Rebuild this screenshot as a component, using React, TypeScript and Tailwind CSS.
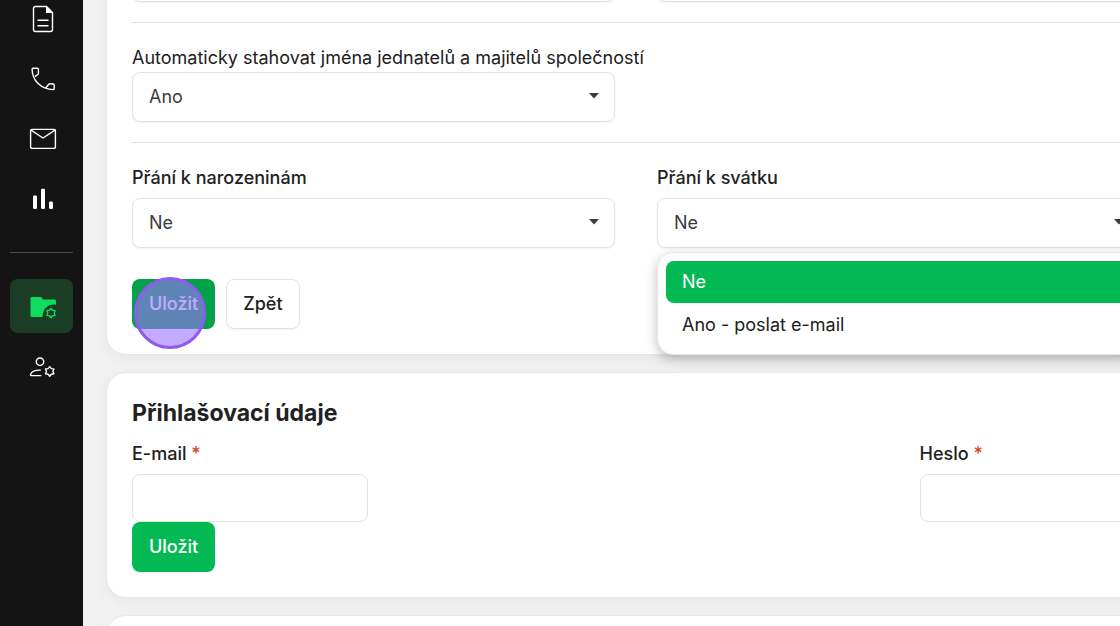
import { useState } from 'react'
import type { ReactNode } from 'react'

const gear = 'M0-4.8 1.6-2.8 4.2-2.4 3.2 0 4.2 2.4 1.6 2.8 0 4.8-1.6 2.8-4.2 2.4-3.2 0-4.2-2.4-1.6-2.8Z'

interface NavItem {
  id: string
  label: string
  icon: ReactNode
}

const mainItems: NavItem[] = [
  {
    id: 'documents',
    label: 'Dokumenty',
    icon: (
      <>
        <path d="M7.5 1.5H18.5L24.5 7.5V24.5a2 2 0 0 1-2 2H7.5a2 2 0 0 1-2-2V3.5a2 2 0 0 1 2-2Z" />
        <path d="M18 1.5V8h6.5Z" fill="currentColor" stroke="none" />
        <path d="M10 15.3h10M10 20.8h10" />
      </>
    )
  },
  {
    id: 'calls',
    label: 'Hovory',
    icon: (
      <path d="M7.3 11.4 10 9.2a1.2 1.2 0 0 0 .4-.9V4.3a1 1 0 0 0-1-1H5A.9.9 0 0 0 4.1 4.2C4.2 15.5 13 24.4 25.3 24.6a.9.9 0 0 0 .9-.9V20.2a1.2 1.2 0 0 0-1.1-1.2l-3-.3a1.600 1.600 0 0 0-1.300.5L18.300 22.300" />
    )
  },
  {
    id: 'mail',
    label: 'Pošta',
    icon: (
      <>
        <rect x="2.6" y="4.4" width="24.8" height="19" rx="1.5" />
        <path d="M3 5.2 15 13 27 5.2" />
      </>
    )
  },
  {
    id: 'stats',
    label: 'Statistiky',
    icon: (
      <g fill="currentColor" stroke="none">
        <rect x="5" y="10.5" width="4" height="13.5" rx="1.3" />
        <rect x="13" y="3.7" width="4" height="20.3" rx="1.3" />
        <rect x="21" y="16.5" width="4" height="7.5" rx="1.3" />
      </g>
    )
  }
]

const settingsItems: NavItem[] = [
  {
    id: 'settings',
    label: 'Nastavení',
    icon: (
      <>
        <path
          d="M2.5 6.4A1.4 1.4 0 0 1 3.9 5H12.5a1.5 1.5 0 0 1 1.2.6L15.2 7.5H26.5A1.5 1.5 0 0 1 28 9V12.8C20 11.5 14.5 17 14.6 25H3.9a1.4 1.4 0 0 1-1.4-1.4Z"
          fill="currentColor"
          stroke="none"
        />
        <path d={gear} transform="translate(23 21)" />
      </>
    )
  },
  {
    id: 'users',
    label: 'Uživatelé',
    icon: (
      <>
        <circle cx="12" cy="9.7" r="3.7" />
        <path d="M12.8 23.6H3.2a.7.7 0 0 1-.7-.8C3 20 7 18.1 12.4 18.1" />
        <path d={gear} transform="translate(21.7 19.4)" />
      </>
    )
  }
]

function NavLink({ item, active }: { item: NavItem; active?: boolean }) {
  return (
    <a
      href={`#${item.id}`}
      aria-label={item.label}
      className={`flex h-[54px] items-center justify-center rounded-lg ${
        active ? 'bg-[#1b3c25] text-[#0fdc5f]' : 'text-white'
      }`}
    >
      <svg
        viewBox="0 0 28 28"
        className="size-7 overflow-visible"
        fill="none"
        stroke="currentColor"
        strokeWidth="1.4"
        strokeLinejoin="round"
        strokeLinecap="round"
      >
        {item.icon}
      </svg>
    </a>
  )
}

interface SelectFieldProps {
  id: string
  label: string
  options: string[]
  value: string
  onChange?: (value: string) => void
}

function SelectField({ id, label, options, value, onChange }: SelectFieldProps) {
  return (
    <div className="relative">
      <select
        id={id}
        aria-label={label}
        value={value}
        onChange={(e) => onChange?.(e.target.value)}
        className="block h-[50px] w-full appearance-none rounded-lg border border-[#e2e2e2] bg-white px-4 text-[#3c3c3c] shadow-xs outline-none"
      >
        {options.map((option) => (
          <option key={option}>{option}</option>
        ))}
      </select>
      <svg viewBox="0 0 10 6" className="pointer-events-none absolute top-[21px] right-4 h-1.5 w-2.5 fill-[#3c3c3c]">
        <path d="M0 0h10L5 5.5Z" />
      </svg>
    </div>
  )
}

const cardClass = 'rounded-[20px] border border-[#e8e8e8] bg-white px-[25px] py-[25px] shadow-[0_4px_16px_rgba(0,0,0,0.05)]'
const inputClass = 'block h-12 w-[236px] rounded-lg border border-[#e2e2e2] bg-white px-4 outline-none'

export default function App() {
  const [download, setDownload] = useState('Ano')
  const [birthday, setBirthday] = useState('Ne')
  const [nameday, setNameday] = useState('Ne')
  const wishes = ['Ne', 'Ano - poslat e-mail']

  return (
    <div className="flex h-screen overflow-hidden bg-[#f2f2f2] font-['Inter','Liberation_Sans',sans-serif] text-lg leading-7 text-[#212121]">
      <aside className="w-[83px] shrink-0 bg-[#141414] px-2.5">
        <nav className="-mt-2 flex flex-col gap-1.5">
          {mainItems.map((item) => (
            <NavLink key={item.id} item={item} />
          ))}
          <hr className="my-5 border-[#4a4a4a]" />
          {settingsItems.map((item) => (
            <NavLink key={item.id} item={item} active={item.id === 'settings'} />
          ))}
        </nav>
      </aside>

      {/* The form area is wider than the window and runs off its right edge */}
      <main className="-mr-[594px] flex min-w-0 flex-1 flex-col gap-[17px] px-[23px]">
        <section className={`-mt-[74px] shrink-0 ${cardClass}`}>
          <div className="grid grid-cols-3 gap-x-[42px]">
            <SelectField id="sms" label="SMS" options={['Ne']} value="Ne" />
            <SelectField id="reminder" label="Připomenutí" options={['Ne']} value="Ne" />
          </div>

          <hr className="mt-5 mb-[21px] border-[#e2e2e2]" />

          <label htmlFor="download">Automaticky stahovat jména jednatelů a majitelů společností</label>
          <div className="grid grid-cols-3 gap-x-[42px]">
            <SelectField
              id="download"
              label="Automaticky stahovat jména jednatelů a majitelů společností"
              options={['Ano', 'Ne']}
              value={download}
              onChange={setDownload}
            />
          </div>

          <hr className="mt-5 mb-[21px] border-[#e2e2e2]" />

          <div className="grid grid-cols-3 gap-x-[42px]">
            <div>
              <label htmlFor="birthday" className="mb-1.5 block font-medium">Přání k narozeninám</label>
              <SelectField
                id="birthday"
                label="Přání k narozeninám"
                options={wishes}
                value={birthday}
                onChange={setBirthday}
              />
            </div>
            <div className="relative">
              <label htmlFor="nameday" className="mb-1.5 block font-medium">Přání k svátku</label>
              <SelectField
                id="nameday"
                label="Přání k svátku"
                options={wishes}
                value={nameday}
                onChange={setNameday}
              />
              <div
                role="listbox"
                aria-label="Přání k svátku"
                className="absolute inset-x-0 top-full z-10 mt-1 flex flex-col gap-px rounded-2xl border border-[#e8e8e8] bg-white p-2 shadow-[0_4px_12px_rgba(0,0,0,0.25)]"
              >
                {wishes.map((wish) => (
                  <button
                    key={wish}
                    type="button"
                    role="option"
                    aria-selected={wish === nameday}
                    onClick={() => setNameday(wish)}
                    className={`h-[42px] rounded-lg px-4 text-left ${wish === nameday ? 'bg-[#03b954] text-white' : ''}`}
                  >
                    {wish}
                  </button>
                ))}
              </div>
            </div>
          </div>

          <div className="mt-[31px] flex gap-[11px]">
            <div className="relative">
              <button type="submit" className="h-[50px] rounded-lg bg-[#02a14a] px-[17px] font-medium text-white">
                Uložit
              </button>
              {/* Click marker */}
              <span className="pointer-events-none absolute -top-0.5 left-0.5 size-[72px] rounded-full border-3 border-[#8f5bee] bg-[#9e73ff]/60" />
            </div>
            <button type="button" className="h-[50px] rounded-lg border border-[#e2e2e2] px-4 font-medium shadow-xs">
              Zpět
            </button>
          </div>
        </section>

        <section className={`shrink-0 ${cardClass}`}>
          <h2 className="mb-3 text-[23px] leading-[30px] font-bold">Přihlašovací údaje</h2>
          <div className="grid grid-cols-2 gap-x-[42px]">
            <div>
              <label htmlFor="email" className="mb-1.5 block font-medium">
                E-mail <span className="text-[#d1481f]">*</span>
              </label>
              <input id="email" type="email" className={inputClass} />
            </div>
            <div>
              <label htmlFor="password" className="mb-1.5 block font-medium">
                Heslo <span className="text-[#d1481f]">*</span>
              </label>
              <input id="password" type="password" className={inputClass} />
            </div>
          </div>
          <button type="submit" className="block h-[50px] rounded-lg bg-[#03b954] px-[17px] font-medium text-white">
            Uložit
          </button>
        </section>

        <section className={`shrink-0 ${cardClass}`} />
      </main>
    </div>
  )
}
